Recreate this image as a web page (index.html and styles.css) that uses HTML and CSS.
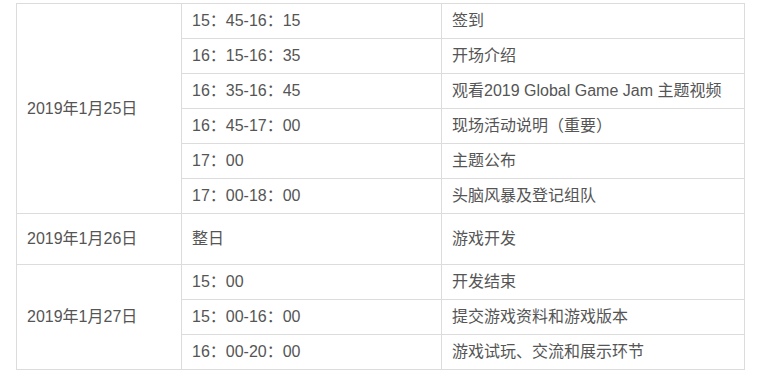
FILE: index.html
```html
<!DOCTYPE html>
<html lang="zh-CN">
<head>
<meta charset="utf-8">
<title>日程</title>
<link rel="stylesheet" href="styles.css">
</head>
<body>
<div class="wrap">
<table class="schedule">
<colgroup><col class="c1"><col class="c2"><col class="c3"></colgroup>
<tbody>
<tr><td rowspan="6">2019年1月25日</td><td>15：45-16：15</td><td>签到</td></tr>
<tr><td>16：15-16：35</td><td>开场介绍</td></tr>
<tr><td>16：35-16：45</td><td>观看2019 Global Game Jam 主题视频</td></tr>
<tr><td>16：45-17：00</td><td>现场活动说明（重要）</td></tr>
<tr><td>17：00</td><td>主题公布</td></tr>
<tr><td>17：00-18：00</td><td>头脑风暴及登记组队</td></tr>
<tr class="tall"><td>2019年1月26日</td><td>整日</td><td>游戏开发</td></tr>
<tr><td rowspan="3">2019年1月27日</td><td>15：00</td><td>开发结束</td></tr>
<tr><td>15：00-16：00</td><td>提交游戏资料和游戏版本</td></tr>
<tr><td>16：00-20：00</td><td>游戏试玩、交流和展示环节</td></tr>
</tbody>
</table>
</div>
</body>
</html>
```

FILE: styles.css
```css
html, body {
  margin: 0;
  padding: 0;
  background: #fff;
}
.wrap {
  padding: 3px 14px 0 16px;
}
.schedule {
  border-collapse: collapse;
  table-layout: fixed;
  width: 728px;
  font-family: "Liberation Sans", "Noto Sans CJK SC", sans-serif;
  font-size: 16px;
  color: #555;
}
.c1 { width: 165px; }
.c2 { width: 260px; }
.c3 { width: 303px; }
.schedule td {
  border: 1px solid #dcdcdc;
  padding: 5px 10px;
  line-height: 24px;
  vertical-align: middle;
  white-space: nowrap;
}
.schedule tr.tall td {
  padding-top: 13px;
  padding-bottom: 13px;
}
```
